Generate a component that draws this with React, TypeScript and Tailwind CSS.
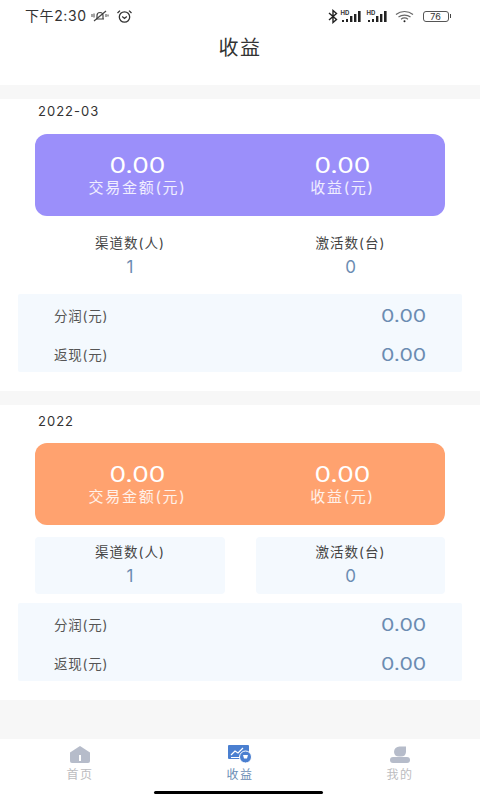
const font = { fontFamily: '"Inter", "Noto Sans CJK SC", sans-serif' };

function MuteBell() {
  return (
    <svg width="20" height="14" viewBox="0 0 20 14" fill="none" stroke="#444" strokeWidth="1.2">
      <path d="M6 10h8M7 10V6.5a3 3 0 0 1 6 0V10" />
      <path d="M4 12 16 2" />
      <path d="M2 5v3M4 4.5v4M16 5v3M18 5.5v2" strokeWidth="1" />
    </svg>
  );
}

function Alarm() {
  return (
    <svg width="17" height="15" viewBox="0 0 17 15" fill="none" stroke="#333" strokeWidth="1.3">
      <circle cx="8.5" cy="8" r="5.2" />
      <path d="M6.2 7.5 8.500 9.500l2.300-2" />
      <path d="M1.500 4 4 1.600M15.500 4 13 1.600" />
    </svg>
  );
}

function Signal() {
  return (
    <div className="relative h-[13px] w-[21px]">
      <span className="absolute left-0 top-[-1px] text-[6px] font-bold leading-[7px] text-[#333]">HD</span>
      <svg className="absolute left-0 top-0" width="21" height="13" viewBox="0 0 21 13" fill="#222">
        <rect x="1" y="10" width="2" height="2" />
        <rect x="5" y="9" width="2" height="3" />
        <rect x="9" y="6" width="2.4" height="6" />
        <rect x="13" y="4" width="2.4" height="8" />
        <rect x="17" y="1" width="2.6" height="11" />
      </svg>
    </div>
  );
}

function StatusBar() {
  return (
    <div className="flex h-[32px] items-center justify-between pl-[25px] pr-[29px]">
      <div className="flex items-center gap-[3px]">
        <span className="text-[14px] leading-none tracking-[0.6px] text-[#333]">下午2:30</span>
        <MuteBell />
        <span className="ml-[3px]"><Alarm /></span>
      </div>
      <div className="flex items-center gap-[3px]">
        <svg width="10" height="15" viewBox="0 0 10 15" fill="none" stroke="#222" strokeWidth="1.4">
          <path d="M1 4l7.500 6.500L5 13.500v-12L8.500 4.500 1 11" />
        </svg>
        <Signal />
        <span className="ml-[2px]"><Signal /></span>
        <svg className="ml-[4px]" width="19" height="13" viewBox="0 0 19 13" fill="none" stroke="#666" strokeWidth="1.2">
          <path d="M1 4.500c5-4 12-4 17 0" />
          <path d="M3.500 7c3.500-2.600 8.500-2.600 12 0" />
          <path d="M6 9.200c2-1.400 5-1.400 7 0" />
          <circle cx="9.5" cy="11.3" r="1" fill="#222" stroke="none" />
        </svg>
        <div className="ml-[6px] flex items-center">
          <div className="flex h-[11px] w-[26px] items-center justify-center rounded-[3px] border border-[#555] text-[9px] leading-none text-[#333]">
            76
          </div>
          <div className="ml-[1px] h-[4px] w-[1.5px] bg-[#444]" />
        </div>
      </div>
    </div>
  );
}

function Money({ value, label }: { value: string; label: string }) {
  return (
    <div className="flex flex-col items-center">
      <div className="scale-x-[1.25] text-[21px] leading-[26px] text-white">{value}</div>
      <div className="text-[15px] leading-[18px] tracking-[1.7px] text-white/85">{label}</div>
    </div>
  );
}

function Stat({ label, value, boxed }: { label: string; value: string; boxed?: boolean }) {
  return (
    <div className={`flex h-[57px] flex-col items-center pt-[5px] ${boxed ? "rounded-[4px] bg-[#f4f9fe]" : ""}`}>
      <div className="text-[13.5px] leading-[20px] tracking-[1px] text-[#444]">{label}</div>
      <div className="mt-[3px] text-[17px] leading-[22px] text-[#6b8cb2]">{value}</div>
    </div>
  );
}

function Row({ label, value }: { label: string; value: string }) {
  return (
    <div className="flex h-[39px] items-center justify-between pl-[36px] pr-[36px] pt-[4px]">
      <span className="mt-[1px] text-[13.5px] tracking-[0.8px] text-[#555]">{label}</span>
      <span className="origin-right scale-x-[1.25] text-[17px] leading-[22px] text-[#6b8cb2]">{value}</span>
    </div>
  );
}

function Section({ date, cardClass, boxed }: { date: string; cardClass: string; boxed?: boolean }) {
  return (
    <div className="bg-white pb-[19px]">
      <div className={`pl-[38px] text-[13px] leading-[24px] tracking-[1px] text-[#333] ${boxed ? "pt-[4px]" : ""}`}>{date}</div>
      <div className={`mx-[35px] grid h-[82px] grid-cols-2 items-center rounded-[12px] ${boxed ? "mt-[10px]" : "mt-[11px]"} ${cardClass}`}>
        <Money value="0.00" label="交易金额(元)" />
        <Money value="0.00" label="收益(元)" />
      </div>
      <div className="mx-[35px] mt-[12px] grid grid-cols-[190px_189px] justify-between">
        <Stat label="渠道数(人)" value="1" boxed={boxed} />
        <Stat label="激活数(台)" value="0" boxed={boxed} />
      </div>
      <div className="mx-[18px] mt-[9px] rounded-[2px] bg-[#f4f9fe]">
        <Row label="分润(元)" value="0.00" />
        <Row label="返现(元)" value="0.00" />
      </div>
    </div>
  );
}

function NavItem({ label, active, icon }: { label: string; active?: boolean; icon: React.ReactNode }) {
  return (
    <div className="flex flex-1 flex-col items-center">
      <div className="flex h-[22px] items-center justify-center">{icon}</div>
      <span className={`mt-[2px] text-[12px] leading-[16px] tracking-[1.5px] ${active ? "text-[#6b8db5]" : "text-[#bcbcc0]"}`}>{label}</span>
    </div>
  );
}

export default function App() {
  return (
    <div className="relative flex h-[800px] w-[480px] flex-col overflow-hidden bg-[#f7f7f7]" style={font}>
      <div className="bg-white">
        <StatusBar />
        <div className="flex h-[53px] items-start justify-center pt-[2px] text-[20px] leading-[28px] tracking-[1.5px] text-[#333]">收益</div>
      </div>
      <div className="mt-[14px]">
        <Section date="2022-03" cardClass="bg-[#9b8ffa]" />
      </div>
      <div className="mt-[14px]">
        <Section date="2022" cardClass="bg-[#ffa26f]" boxed />
      </div>
      <div className="mt-auto flex h-[61px] bg-white pt-[4px]">
        <NavItem
          label="首页"
          icon={
            <svg width="20" height="17" viewBox="0 0 20 17">
              <path d="M0 6.500 10 0l10 6.500V15a2 2 0 0 1-2 2H2a2 2 0 0 1-2-2Z" fill="#b6bcca" />
              <rect x="9" y="9" width="2" height="6" fill="#fff" />
            </svg>
          }
        />
        <NavItem
          active
          label="收益"
          icon={
            <svg width="24" height="18" viewBox="0 0 24 18">
              <rect x="0" y="0" width="21" height="14" rx="1" fill="#4a7fd0" />
              <path d="M3 10l4-4 3 2 5-5" fill="none" stroke="#fff" strokeWidth="1.2" />
              <path d="M3 12.500h9" stroke="#fff" strokeWidth="1" />
              <circle cx="17.5" cy="12" r="6" fill="#4a7fd0" stroke="#fff" strokeWidth="1" />
              <path d="M15 10h5l-1 3.500h-3Z" fill="#fff" />
            </svg>
          }
        />
        <NavItem
          label="我的"
          icon={
            <svg width="20" height="17" viewBox="0 0 20 17" fill="#b6bcca">
              <path d="M4 6a5.500 5.500 0 0 1 5.500-5.500H16V6a5 5 0 0 1-5 4.500H9A5 5 0 0 1 4 6Z" />
              <rect x="0" y="11" width="20" height="6" rx="3" />
            </svg>
          }
        />
      </div>
      <div className="absolute bottom-[6px] left-[154px] h-[3px] w-[169px] rounded-full bg-black" />
    </div>
  );
}
